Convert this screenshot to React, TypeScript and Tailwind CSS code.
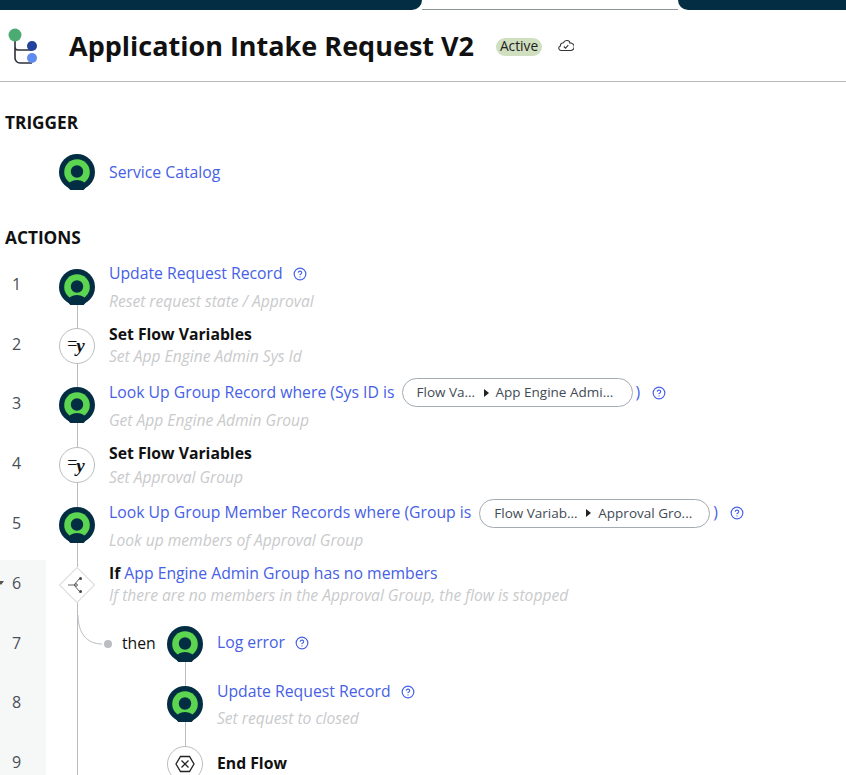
import React from "react";
import { CircleHelp } from "lucide-react";

const lineColor = "bg-[#b9bdc1]";

function ActionIcon() {
  return (
    <svg width="36" height="36" viewBox="0 0 36 36" className="shrink-0">
      <circle cx="18" cy="18" r="18" fill="#032d42" />
      <circle cx="18" cy="18" r="12.8" fill="#5cd650" />
      <ellipse cx="18" cy="32" rx="9" ry="6" fill="#032d42" />
      <circle cx="18" cy="17.5" r="6.2" fill="#032d42" />
    </svg>
  );
}

function VarIcon() {
  return (
    <div className="flex h-9 w-9 shrink-0 items-center justify-center rounded-full border border-[#b9bdc1] bg-white font-['Liberation_Serif',serif] text-[19px] leading-none text-[#111]">
      <span className="-mr-[1px] -translate-x-[1px] -translate-y-[2px] text-[18px]">=</span>
      <span className="-translate-x-[1px] font-bold italic">y</span>
    </div>
  );
}

function IfIcon() {
  return (
    <svg width="36" height="36" viewBox="0 0 36 36" fill="none" className="shrink-0">
      <polygon points="18,0.5 35.5,18 18,35.5 0.5,18" fill="#fff" stroke="#c6cacd" />
      <path d="M9 18h6l5-6M15 18l5 6" stroke="#555" strokeWidth="0.9" />
      <circle cx="21.5" cy="11.5" r="1.5" fill="#444" />
      <circle cx="21.5" cy="24.5" r="1.5" fill="#444" />
      <circle cx="17" cy="18" r="1.3" stroke="#444" strokeWidth="0.9" fill="#fff" />
    </svg>
  );
}

function EndIcon() {
  return (
    <div className="flex h-9 w-9 shrink-0 items-center justify-center rounded-full border border-[#b9bdc1] bg-white">
      <svg width="20" height="18" viewBox="0 0 20 18" fill="none" stroke="#222" strokeWidth="1.3">
        <polygon points="5.5,1.5 14.5,1.5 19,9 14.5,16.5 5.5,16.5 1,9" />
        <path d="M6.5 5.5l7 7M13.5 5.5l-7 7" />
      </svg>
    </div>
  );
}

function Help() {
  return <CircleHelp className="h-[14px] w-[14px] shrink-0 text-[#4660e6]" strokeWidth={2} />;
}

function Pill({ from, to, fromWidth, ml }: { from: string; to: string; fromWidth: string; ml: string }) {
  return (
    <span className={`mr-[3px] flex h-[29px] w-[231px] shrink-0 items-center rounded-full border border-[#a3abb2] pl-[14px] text-[13.5px] text-[#3f4a54] ${ml}`}>
      <span className={`whitespace-nowrap ${fromWidth}`}>{from}</span>
      <span className="mr-[7px] h-0 w-0 shrink-0 border-y-[4px] border-l-[5px] border-y-transparent border-l-[#222]" />
      <span>{to}</span>
    </span>
  );
}

function Step({
  h,
  icon,
  top = true,
  bottom = true,
  pad = "",
  children,
}: {
  h: string;
  icon: React.ReactNode;
  top?: boolean;
  bottom?: boolean;
  pad?: string;
  children: React.ReactNode;
}) {
  return (
    <div className={`flex ${h}`}>
      <div className="flex w-9 shrink-0 flex-col items-center">
        <div className={`w-px flex-1 ${top ? lineColor : ""}`} />
        {icon}
        <div className={`w-px flex-1 ${bottom ? lineColor : ""}`} />
      </div>
      <div className={`ml-[14px] flex min-w-0 flex-col justify-center whitespace-nowrap ${pad}`}>{children}</div>
    </div>
  );
}

function Title({ children }: { children: React.ReactNode }) {
  return <div className="flex h-[22px] items-center text-[15.75px] text-[#4660e6]">{children}</div>;
}

function Bold({ children }: { children: React.ReactNode }) {
  return <div className="flex h-[22px] items-center text-[15.75px] font-bold text-[#111]">{children}</div>;
}

function Sub({ mt = "", children }: { mt?: string; children: React.ReactNode }) {
  return <div className={`h-[20px] text-[15.6px] leading-[20px] text-[#c9cacc] italic ${mt}`}>{children}</div>;
}

export default function App() {
  return (
    <div className="h-screen overflow-hidden bg-white font-['Open_Sans',sans-serif] text-[#111]">
      <div className="flex h-[10px]">
        <div className="w-[422px] rounded-br-[12px] bg-[#032d42]" />
        <div className="flex-1 border-b border-[#8f9496]" />
        <div className="w-[168px] rounded-bl-[12px] bg-[#032d42]" />
      </div>

      <header className="flex h-[72px] items-center border-b border-[#b7b9ba]">
        <svg width="34" height="40" viewBox="0 0 34 40" fill="none" className="ml-[7px] shrink-0">
          <path d="M8 10v22a5 5 0 0 0 5 5h12M8 21a3 3 0 0 0 3 3h14" stroke="#2c3138" strokeWidth="1.6" />
          <circle cx="8" cy="9" r="6.5" fill="#4cab72" />
          <circle cx="25" cy="20" r="5" fill="#22429b" />
          <circle cx="25" cy="32" r="5" fill="#5f8cf0" />
        </svg>
        <h1 className="mt-[2px] ml-[28px] text-[27px] font-bold whitespace-nowrap text-[#111]">Application Intake Request V2</h1>
        <span className="mt-[2px] ml-[22px] flex h-[18px] w-[46px] items-center justify-center rounded-full bg-[#cfdfbf] text-[13.75px] text-[#222]">
          Active
        </span>
        <svg width="16" height="13" viewBox="0 0 16 13" fill="none" stroke="#333" strokeWidth="1.1" className="ml-[16px]">
          <path d="M4 11.5H3a2.3 2.3 0 0 1-.6-4.5 3 3 0 0 1 3-3.2A3.6 3.6 0 0 1 9 1.5a3 3 0 0 1 3 2.6 3.6 3.6 0 0 1 1 7.4Z" />
          <path d="M5.8 7.5l1.7 1.7 2.8-3" />
        </svg>
      </header>

      <h2 className="mt-[29px] ml-[5px] h-[24px] text-[17.25px] leading-[24px] font-bold">TRIGGER</h2>
      <div className="mt-[19px] ml-[59px]">
        <Step h="h-9" icon={<ActionIcon />} top={false} bottom={false} pad="pt-[2px]">
          <Title>Service Catalog</Title>
        </Step>
      </div>
      <h2 className="mt-[36px] ml-[5px] h-[23px] text-[17.25px] leading-[24px] font-bold">ACTIONS</h2>

      <div className="flex">
        <div className="w-[46px] shrink-0 pt-[5px] text-[16px] text-[#4a4f55]">
          {[1, 2, 3, 4, 5].map((n) => (
            <div key={n} className="flex h-[59.75px] items-center pl-[12px]">
              {n}
            </div>
          ))}
          <div className="mt-[7px] bg-[#f6f8f8]">
            <div className="flex h-[53px] items-center pb-[7px]">
              <span className="h-0 w-0 -translate-x-[2px] border-x-[3px] border-t-[4px] border-x-transparent border-t-[#555]" />
              <span className="ml-[6px]">6</span>
            </div>
            {[7, 8, 9].map((n) => (
              <div key={n} className="flex h-[59.75px] items-center pl-[12px]">
                {n}
              </div>
            ))}
          </div>
        </div>

        <div className="min-w-0 flex-1 pt-[8px] pl-[13px]">
          <Step h="h-[60px]" icon={<ActionIcon />} top={false}>
            <Title>
              Update Request Record
              <span className="ml-[10px] flex">
                <Help />
              </span>
            </Title>
            <Sub mt="mt-[6px]">Reset request state / Approval</Sub>
          </Step>
          <Step h="h-[57px]" icon={<VarIcon />} pad="pb-[2px]">
            <Bold>Set Flow Variables</Bold>
            <Sub>Set App Engine Admin Sys Id</Sub>
          </Step>
          <Step h="h-[62px]" icon={<ActionIcon />} pad="pt-[1px]">
            <Title>
              Look Up Group Record where (Sys ID is
              <Pill ml="ml-[7px]" from="Flow Va..." fromWidth="w-[67px]" to="App Engine Admi..." />
              )
              <span className="ml-[12px] flex">
                <Help />
              </span>
            </Title>
            <Sub mt="mt-[6px]">Get App Engine Admin Group</Sub>
          </Step>
          <Step h="h-[58px]" icon={<VarIcon />}>
            <Bold>Set Flow Variables</Bold>
            <Sub mt="mt-[2px]">Set Approval Group</Sub>
          </Step>
          <Step h="h-[61px]" icon={<ActionIcon />} pad="pt-[3px]">
            <Title>
              Look Up Group Member Records where (Group is
              <Pill ml="ml-[8px]" from="Flow Variab..." fromWidth="w-[92px]" to="Approval Gro..." />
              )
              <span className="ml-[12px] flex">
                <Help />
              </span>
            </Title>
            <Sub mt="mt-[6px]">Look up members of Approval Group</Sub>
          </Step>
          <Step h="h-[60px]" icon={<IfIcon />} pad="pb-[2px]">
            <Title>
              <span className="mr-[4px] font-bold text-[#111]">If</span>
              App Engine Admin Group has no members
            </Title>
            <Sub>If there are no members in the Approval Group, the flow is stopped</Sub>
          </Step>

          <div className="relative flex">
            <div className="flex w-9 shrink-0 justify-center">
              <div className={`w-px ${lineColor}`} />
            </div>
            <svg width="26" height="30" viewBox="0 0 26 30" fill="none" className="absolute top-0 left-[18px]">
              <path d="M1 0C1 17 9 29 25 29" stroke="#b9bdc1" />
            </svg>
            <div className="min-w-0 flex-1">
              <div className="flex">
                <div className="flex w-[72px] shrink-0 items-center pl-[9px] text-[15.75px]">
                  <span className="h-2 w-2 rounded-full bg-[#bcbdc2]" />
                  <span className="ml-[10px]">then</span>
                </div>
                <div className="min-w-0 flex-1">
                  <Step h="h-[57px]" icon={<ActionIcon />} top={false} pad="pb-[2px]">
                    <Title>
                      Log error
                      <span className="ml-[10px] flex">
                        <Help />
                      </span>
                    </Title>
                  </Step>
                </div>
              </div>
              <div className="pl-[72px]">
                <Step h="h-[64px]" icon={<ActionIcon />} pad="pt-[1px]">
                  <Title>
                    Update Request Record
                    <span className="ml-[10px] flex">
                      <Help />
                    </span>
                  </Title>
                  <Sub mt="mt-[5px]">Set request to closed</Sub>
                </Step>
                <Step h="h-[56px]" icon={<EndIcon />}>
                  <Bold>End Flow</Bold>
                </Step>
              </div>
            </div>
          </div>
        </div>
      </div>
    </div>
  );
}
